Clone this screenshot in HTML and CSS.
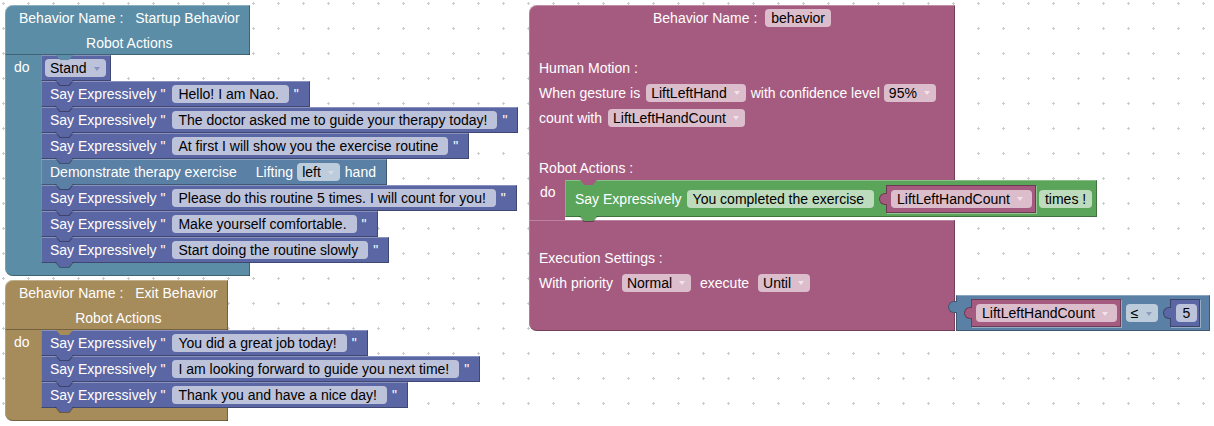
FILE: index.html
```html
<!DOCTYPE html>
<html>
<head>
<meta charset="utf-8">
<link rel="stylesheet" href="styles.css">
</head>
<body>
<div class="ws">
  <svg class="grid" width="1214" height="426" xmlns="http://www.w3.org/2000/svg">
    <defs>
      <pattern id="gp" width="25" height="25" patternUnits="userSpaceOnUse" x="2" y="2">
        <path d="M0 1.5H3M1.5 0V3" stroke="#cccccc" stroke-width="1" fill="none"/>
      </pattern>
    </defs>
    <rect width="1214" height="426" fill="url(#gp)"/>
  </svg>

  <div class="beh startup">
    <div class="beh-head">
      <div class="hrow"><span>Behavior Name :</span><span class="gap12">Startup Behavior</span></div>
      <div class="hrow center">Robot Actions</div>
    </div>
    <div class="beh-body">
      <div class="arm">do</div>
      <div class="stack">
        <div class="sb tight"><span class="f">Stand<i class="dd"></i></span></div>
        <div class="sb"><span>Say Expressively "</span><span class="f t">Hello! I am Nao.</span><span>"</span></div>
        <div class="sb"><span>Say Expressively "</span><span class="f t">The doctor asked me to guide your therapy today!</span><span>"</span></div>
        <div class="sb"><span>Say Expressively "</span><span class="f t">At first I will show you the exercise routine</span><span>"</span></div>
        <div class="sb demo"><span>Demonstrate therapy exercise</span><span class="gap19">Lifting</span><span class="f fl">left<i class="dd"></i></span><span>hand</span></div>
        <div class="sb"><span>Say Expressively "</span><span class="f t">Please do this routine 5 times. I will count for you!</span><span>"</span></div>
        <div class="sb"><span>Say Expressively "</span><span class="f t">Make yourself comfortable.</span><span>"</span></div>
        <div class="sb"><span>Say Expressively "</span><span class="f t">Start doing the routine slowly</span><span>"</span></div>
      </div>
    </div>
    <div class="beh-foot"></div>
  </div>

  <div class="beh exit">
    <div class="beh-head">
      <div class="hrow"><span>Behavior Name :</span><span class="gap12">Exit Behavior</span></div>
      <div class="hrow center">Robot Actions</div>
    </div>
    <div class="beh-body">
      <div class="arm">do</div>
      <div class="stack">
        <div class="sb"><span>Say Expressively "</span><span class="f t">You did a great job today!</span><span>"</span></div>
        <div class="sb"><span>Say Expressively "</span><span class="f t">I am looking forward to guide you next time!</span><span>"</span></div>
        <div class="sb"><span>Say Expressively "</span><span class="f t">Thank you and have a nice day!</span><span>"</span></div>
      </div>
    </div>
    <div class="beh-foot"></div>
  </div>

  <div class="bb">
    <div class="bb-top">
      <div class="prow center"><span>Behavior Name :</span><span class="f fh">behavior</span></div>
      <div class="prow"></div>
      <div class="prow">Human Motion :</div>
      <div class="prow"><span>When gesture is</span><span class="f">LiftLeftHand<i class="dd"></i></span><span>with confidence level</span><span class="f fe">95%<i class="dd"></i></span></div>
      <div class="prow"><span>count with</span><span class="f">LiftLeftHandCount<i class="dd"></i></span></div>
      <div class="prow"></div>
      <div class="prow">Robot Actions :</div>
    </div>
    <div class="pstmt">
      <div class="parm">do</div>
      <div class="pint">
        <div class="sb green">
          <span>Say Expressively</span>
          <span class="f fg">You completed the exercise</span>
          <span class="vb pinkv"><span class="f fin">LiftLeftHandCount<i class="dd"></i></span></span>
          <span class="f ft">times !</span>
        </div>
      </div>
    </div>
    <div class="bb-bot">
      <div class="prow"></div>
      <div class="prow">Execution Settings :</div>
      <div class="prow"><span>With priority</span><span class="f fw">Normal<i class="dd"></i></span><span>execute</span><span class="f fw">Until<i class="dd"></i></span></div>
      <div class="pval">
        <div class="vin">
          <div class="cmp">
            <span class="vb pinkv"><span class="f fin">LiftLeftHandCount<i class="dd"></i></span></span>
            <span class="f fop">≤<i class="dd"></i></span>
            <span class="vb purplev"><span class="f fnum">5</span></span>
          </div>
        </div>
      </div>
    </div>
  </div>
</div>
</body>
</html>
```

FILE: styles.css
```css
body {
  margin: 0;
  background: #ffffff;
  font-family: "Liberation Sans", Arial, sans-serif;
  font-size: 14px;
}

.ws {
  position: relative;
  width: 1214px;
  height: 426px;
  overflow: hidden;
  background: #ffffff;
}

.grid {
  position: absolute;
  left: 0;
  top: 0;
}

/* ---------- behavior (C-shaped) blocks ---------- */
.beh {
  position: absolute;
  display: flex;
  flex-direction: column;
  width: max-content;
  color: #ffffff;
}

.startup { left: 5px; top: 5px; --c: #5b8da6; }
.exit { left: 5px; top: 280px; --c: #a68b5b; }

.beh-head {
  position: relative;
  height: 50px;
  display: flex;
  flex-direction: column;
  background: var(--c);
  border-radius: 8px 0 0 0;
  box-shadow: inset 0 1px 0 rgba(255,255,255,.3), inset 1px 0 0 rgba(255,255,255,.2),
              inset -1px 0 0 rgba(0,0,0,.3), inset 0 -1px 0 rgba(0,0,0,.3);
}

.beh-head::after {
  content: "";
  position: absolute;
  left: 51px;
  bottom: -5px;
  width: 17px;
  height: 5px;
  background: var(--c);
  clip-path: polygon(0 0, 100% 0, 75% 100%, 25% 100%);
  z-index: 3;
}

.hrow {
  height: 25px;
  display: flex;
  align-items: center;
  padding: 0 10px 0 14px;
  white-space: nowrap;
}

.hrow.center { justify-content: center; }

.gap12 { margin-left: 12px; }
.gap19 { margin-left: 19px; }

.beh-body { display: flex; }

.arm {
  width: 36px;
  flex: none;
  box-sizing: border-box;
  padding-left: 9px;
  line-height: 24px;
  background: var(--c);
  box-shadow: inset 1px 0 0 rgba(255,255,255,.2);
}

.stack {
  flex: none;
  width: 0;
}

.beh-foot {
  height: 13px;
  background: var(--c);
  border-radius: 0 0 0 8px;
  box-shadow: inset -1px 0 0 rgba(0,0,0,.3), inset 0 -1px 0 rgba(0,0,0,.3),
              inset 1px 0 0 rgba(255,255,255,.2);
}

/* ---------- statement blocks ---------- */
.sb {
  --c: #5b67a5;
  --ar: #8990c2;
  position: relative;
  display: flex;
  align-items: center;
  width: max-content;
  height: 26px;
  box-sizing: border-box;
  padding: 0 10px 0 8px;
  background: var(--c);
  color: #ffffff;
  white-space: nowrap;
  border: 1px solid rgba(0,0,0,.3);
  border-top-color: rgba(255,255,255,.28);
  border-left-color: rgba(255,255,255,.2);
}

.sb::before {
  content: "";
  position: absolute;
  left: 13px;
  bottom: -6px;
  width: 19px;
  height: 6px;
  background: rgba(0,0,0,.35);
  clip-path: polygon(0 0, 100% 0, 76% 100%, 24% 100%);
  z-index: 2;
}

.sb::after {
  content: "";
  position: absolute;
  left: 14px;
  bottom: -5px;
  width: 17px;
  height: 5px;
  background: var(--c);
  clip-path: polygon(0 0, 100% 0, 75% 100%, 25% 100%);
  z-index: 2;
}

.sb.tight { padding: 0 4px 0 3px; }
.sb.tight .f { margin: 0; }

.sb.demo { --c: #5b80a5; --ar: #d4dbe7; }

.sb.green {
  --c: #5ba55b;
  height: 37px;
  padding: 0 4px 0 9px;
}

/* ---------- fields ---------- */
.f {
  display: inline-flex;
  align-items: center;
  flex: none;
  height: 18px;
  padding: 0 5px;
  margin: 0 5px 0 6px;
  border-radius: 4px;
  background: rgba(255,255,255,.6);
  color: #000000;
}

.f.t { padding: 0 10px 0 6px; margin: 0 5px 0 7px; }
.f.fl { margin: 0 5px 0 4px; }
.f.fh { margin: 0 0 0 8px; padding: 0 6px; }
.f.fe { margin: 0 0 0 4px; }
.f.fw { margin: 0 9px 0 9px; }
.f.fg { margin: 0 0 0 5px; padding: 0 10px 0 6px; }
.f.ft { margin: 0 0 0 3px; padding: 0 6px; }
.f.fin { margin: 0; padding: 0 8px 0 6px; }
.f.fop { margin: 0 0 0 4px; }
.f.fnum { margin: 0; padding: 0 7px; }

.dd {
  display: inline-block;
  width: 0;
  height: 0;
  border-left: 3.5px solid transparent;
  border-right: 3.5px solid transparent;
  border-top: 4px solid var(--ar);
  margin: 1px 1px 0 7px;
}

/* ---------- value (reporter) blocks ---------- */
.vb {
  position: relative;
  display: flex;
  align-items: center;
  flex: none;
  height: 28px;
  box-sizing: border-box;
  padding: 0 3px 0 4px;
  background: var(--c);
  border: 1px solid rgba(0,0,0,.35);
  box-shadow: 1px 1px 0 rgba(255,255,255,.35);
}

.vb::before {
  content: "";
  position: absolute;
  left: -8px;
  top: 7px;
  width: 7px;
  height: 10px;
  background: var(--c);
  border: 1px solid rgba(0,0,0,.35);
  border-right: 0;
  border-radius: 6px 0 0 6px;
}

.pinkv { --c: #a55b80; --ar: #f2e3ea; margin-left: 12px; }
.purplev { --c: #5b67a5; margin-left: 12px; padding: 0 2px 0 5px; }

.cmp .pinkv { margin-left: 0; }

/* ---------- main behavior block ---------- */
.bb {
  position: absolute;
  left: 529px;
  top: 5px;
  width: 426px;
  --c: #a55b80;
  --ar: #f2e3ea;
  color: #ffffff;
}

.bb-top {
  background: var(--c);
  border-radius: 8px 0 0 0;
  box-shadow: inset 0 1px 0 rgba(255,255,255,.3), inset 1px 0 0 rgba(255,255,255,.2),
              inset -1px 0 0 rgba(0,0,0,.3);
}

.prow {
  height: 25px;
  display: flex;
  align-items: center;
  padding-left: 10px;
  white-space: nowrap;
}

.prow.center {
  justify-content: center;
  padding-left: 0;
}

.pstmt {
  display: flex;
  height: 40px;
}

.parm {
  width: 36px;
  flex: none;
  box-sizing: border-box;
  padding-left: 11px;
  line-height: 24px;
  background: var(--c);
  box-shadow: inset 1px 0 0 rgba(255,255,255,.2);
}

.pint {
  flex: 1;
  position: relative;
  background: #ffffff;
}

.pint::before {
  content: "";
  position: absolute;
  left: 15px;
  top: 0;
  width: 17px;
  height: 5px;
  background: var(--c);
  clip-path: polygon(0 0, 100% 0, 75% 100%, 25% 100%);
  z-index: 3;
}

.bb-bot {
  background: var(--c);
  border-radius: 0 0 0 8px;
  box-shadow: inset -1px 0 0 rgba(0,0,0,.3), inset 0 -1px 0 rgba(0,0,0,.3),
              inset 1px 0 0 rgba(255,255,255,.2), inset 0 1px 0 rgba(255,255,255,.25);
}

.pval {
  height: 36px;
  display: flex;
  justify-content: flex-end;
}

.vin {
  width: 0;
  flex: none;
}

.cmp {
  --c: #5b80a5;
  --ar: #8e9dbc;
  position: relative;
  display: flex;
  align-items: center;
  width: max-content;
  height: 36px;
  box-sizing: border-box;
  margin-left: 1px;
  padding: 0 9px 0 14px;
  background: var(--c);
  border: 1px solid rgba(0,0,0,.3);
  border-top-color: rgba(255,255,255,.28);
  white-space: nowrap;
}

.cmp::before {
  content: "";
  position: absolute;
  left: -9px;
  top: 5px;
  width: 8px;
  height: 10px;
  background: var(--c);
  border: 1px solid rgba(0,0,0,.3);
  border-right: 0;
  border-radius: 6px 0 0 6px;
}

.cmp .f.fop { margin-left: 5px; }
.cmp .purplev { --ar: #8e9dbc; }
```
